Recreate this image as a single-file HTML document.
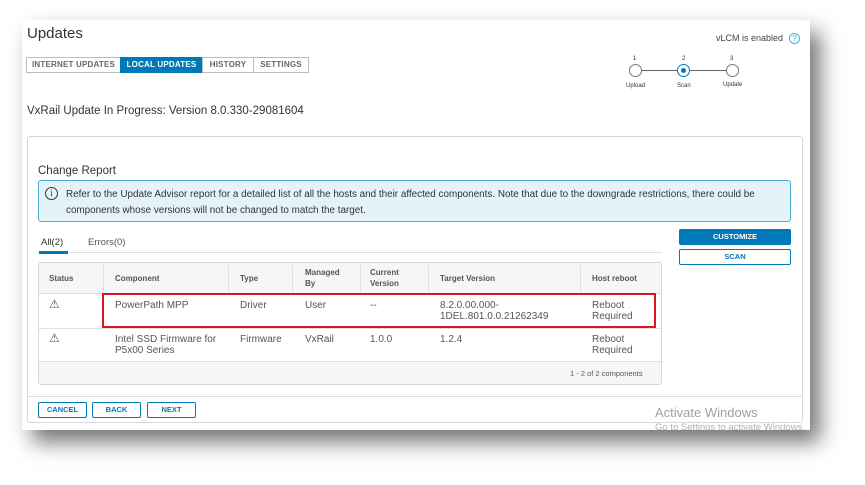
<!DOCTYPE html>
<html><head><style>
*{box-sizing:border-box;margin:0;padding:0}
body{width:865px;height:485px;background:#fff;font-family:"Liberation Sans",sans-serif;position:relative;overflow:hidden;color:#333}
.abs{position:absolute}
#panel{left:22px;top:20px;width:788px;height:410px;background:#fff;box-shadow:10px 12px 20px rgba(0,0,0,.55)}
.tab{position:absolute;top:57px;height:16px;font-size:8px;font-weight:bold;color:#666;border:1px solid #b8bec4;text-align:center;line-height:14px;letter-spacing:.2px}
.th{position:absolute;font-size:8px;font-weight:bold;color:#555;line-height:11px}
.td{position:absolute;font-size:10px;color:#555;line-height:11px}
.btn{position:absolute;height:16px;border:1px solid #0079b8;border-radius:2px;color:#0079b8;font-size:7.5px;font-weight:bold;text-align:center;line-height:14px}
.vl{position:absolute;width:1px;background:#dde0e3}
</style></head><body>
<div id="panel" class="abs"></div>
<div class="abs" style="left:27px;top:25px;font-size:15px;color:#333">Updates</div>
<div class="tab" style="left:26px;width:95px">INTERNET UPDATES</div>
<div class="tab" style="left:120px;width:83px;background:#0079b8;color:#fff;border-color:#0079b8">LOCAL UPDATES</div>
<div class="tab" style="left:202px;width:52px">HISTORY</div>
<div class="tab" style="left:253px;width:56px">SETTINGS</div>
<div class="abs" style="left:716px;top:33px;font-size:9px;color:#444">vLCM is enabled</div>
<div class="abs" style="left:789px;top:33px;width:11px;height:11px;border:1px solid #49afd9;border-radius:50%;font-size:8px;color:#49afd9;text-align:center;line-height:9px">?</div>
<div class="abs" style="left:640px;top:70px;width:90px;height:1px;background:#666"></div>
<div class="abs" style="left:629px;top:64px;width:13px;height:13px;border:1px solid #777;border-radius:50%;background:#fff"></div>
<div class="abs" style="left:677px;top:64px;width:13px;height:13px;border:1.5px solid #0079b8;border-radius:50%;background:#fff"><div style="margin:2.5px;width:5px;height:5px;border-radius:50%;background:#0079b8"></div></div>
<div class="abs" style="left:726px;top:64px;width:13px;height:13px;border:1px solid #777;border-radius:50%;background:#fff"></div>
<div class="abs" style="left:633px;top:56px;font-size:6px">1</div>
<div class="abs" style="left:682px;top:56px;font-size:6px">2</div>
<div class="abs" style="left:730px;top:56px;font-size:6px">3</div>
<div class="abs" style="left:626px;top:83px;font-size:6px">Upload</div>
<div class="abs" style="left:677px;top:83px;font-size:6px">Scan</div>
<div class="abs" style="left:723px;top:82px;font-size:6px">Update</div>
<div class="abs" style="left:27px;top:105px;font-size:11.5px;color:#333">VxRail Update In Progress: Version 8.0.330-29081604</div>
<div class="abs" style="left:27px;top:136px;width:776px;height:287px;border:1px solid #d5d9dc;border-radius:3px"></div>
<div class="abs" style="left:38px;top:165px;font-size:11.5px;color:#333">Change Report</div>
<div class="abs" style="left:38px;top:180px;width:753px;height:42px;background:#e3f3f9;border:1px solid #49afd9;border-radius:3px"></div>
<div class="abs" style="left:45px;top:187px;width:13px;height:13px;border:1px solid #333;border-radius:50%;font-size:9px;text-align:center;line-height:11px;font-family:'Liberation Serif',serif">i</div>
<div class="abs" style="left:66px;top:187px;font-size:9.9px;line-height:16px;color:#333;white-space:nowrap">Refer to the Update Advisor report for a detailed list of all the hosts and their affected components. Note that due to the downgrade restrictions, there could be<br>components whose versions will not be changed to match the target.</div>
<div class="abs" style="left:41px;top:237px;font-size:9.5px;color:#333">All(2)</div>
<div class="abs" style="left:88px;top:237px;font-size:9.5px;color:#555">Errors(0)</div>
<div class="abs" style="left:38px;top:252px;width:624px;height:1px;background:#dde0e3"></div>
<div class="abs" style="left:39px;top:251px;width:29px;height:3px;background:#0079b8"></div>
<div class="btn" style="left:679px;top:229px;width:112px;background:#0079b8;color:#fff">CUSTOMIZE</div>
<div class="btn" style="left:679px;top:249px;width:112px">SCAN</div>
<div class="abs" style="left:38px;top:262px;width:624px;height:123px;border:1px solid #d5d9dc;border-radius:3px;overflow:hidden">
 <div style="position:absolute;left:0;top:0;width:100%;height:31px;background:#f4f6f7;border-bottom:1px solid #dde0e3"></div>
 <div style="position:absolute;left:0;top:65px;width:100%;height:1px;background:#dde0e3"></div>
 <div style="position:absolute;left:0;top:98px;width:100%;height:25px;background:#f4f6f7;border-top:1px solid #dde0e3"></div>
</div>
<div class="vl" style="left:103px;top:265px;height:28px"></div>
<div class="vl" style="left:228px;top:265px;height:28px"></div>
<div class="vl" style="left:292px;top:265px;height:28px"></div>
<div class="vl" style="left:360px;top:265px;height:28px"></div>
<div class="vl" style="left:428px;top:265px;height:28px"></div>
<div class="vl" style="left:580px;top:265px;height:28px"></div>
<div class="th" style="left:49px;top:273px">Status</div>
<div class="th" style="left:115px;top:273px">Component</div>
<div class="th" style="left:240px;top:273px">Type</div>
<div class="th" style="left:305px;top:267px">Managed<br>By</div>
<div class="th" style="left:370px;top:267px">Current<br>Version</div>
<div class="th" style="left:440px;top:273px">Target Version</div>
<div class="th" style="left:592px;top:273px">Host reboot</div>
<div class="td" style="left:49px;top:299px;font-size:12px">⚠</div>
<div class="td" style="left:115px;top:300px">PowerPath MPP</div>
<div class="td" style="left:240px;top:300px">Driver</div>
<div class="td" style="left:305px;top:300px">User</div>
<div class="td" style="left:370px;top:300px">--</div>
<div class="td" style="left:440px;top:300px">8.2.0.00.000-<br>1DEL.801.0.0.21262349</div>
<div class="td" style="left:592px;top:300px">Reboot<br>Required</div>
<div class="td" style="left:49px;top:333px;font-size:12px">⚠</div>
<div class="td" style="left:115px;top:334px">Intel SSD Firmware for<br>P5x00 Series</div>
<div class="td" style="left:240px;top:334px">Firmware</div>
<div class="td" style="left:305px;top:334px">VxRail</div>
<div class="td" style="left:370px;top:334px">1.0.0</div>
<div class="td" style="left:440px;top:334px">1.2.4</div>
<div class="td" style="left:592px;top:334px">Reboot<br>Required</div>
<div class="abs" style="left:570px;top:369px;font-size:7.5px;color:#555">1 - 2 of 2 components</div>
<div class="abs" style="left:102px;top:293px;width:554px;height:35px;border:2px solid #e0141e"></div>
<div class="abs" style="left:27px;top:396px;width:776px;height:1px;background:#dde0e3"></div>
<div class="btn" style="left:38px;top:402px;width:49px">CANCEL</div>
<div class="btn" style="left:92px;top:402px;width:49px">BACK</div>
<div class="btn" style="left:147px;top:402px;width:49px">NEXT</div>
<div class="abs" style="left:655px;top:405px;font-size:13px;color:#a0a0a0">Activate Windows</div>
<div class="abs" style="left:655px;top:422px;font-size:9.5px;color:#b0b0b0;width:155px;height:8px;overflow:hidden;white-space:nowrap;line-height:12px">Go to Settings to activate Windows.</div>
</body></html>
